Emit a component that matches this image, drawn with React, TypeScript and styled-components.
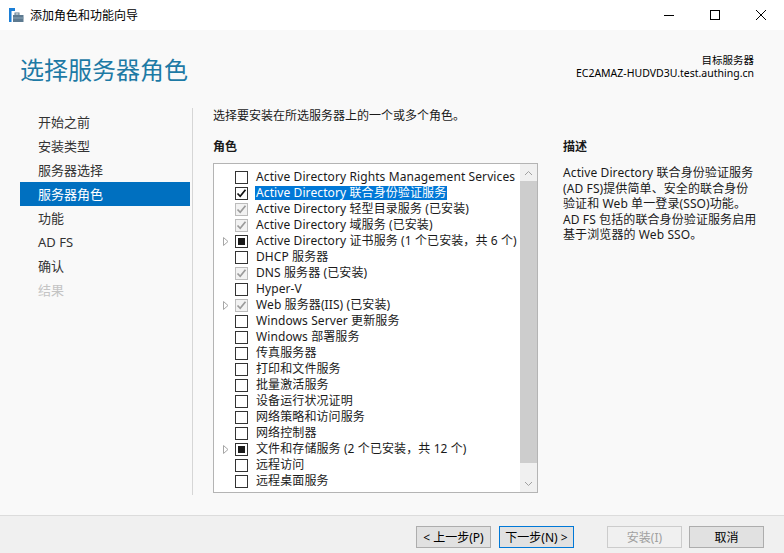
import React from "react";
import styled, { createGlobalStyle } from "styled-components";

const FONT = `"Segoe UI", "Noto Sans", "Noto Sans CJK SC", sans-serif`;

const Global = createGlobalStyle`
  html, body { margin: 0; padding: 0; }
  body { width: 784px; height: 553px; overflow: hidden; font-family: ${FONT}; background: #fff; }
  * { box-sizing: border-box; }
`;

const Window = styled.div`
  width: 784px;
  height: 553px;
  display: flex;
  flex-direction: column;
  background: #fff;
  color: #1a1a1a;
`;

const TitleBar = styled.div`
  height: 30px;
  display: flex;
  align-items: center;
  background: #fff;
  padding-left: 8px;
`;

const TitleText = styled.div`
  font-size: 12px;
  margin-left: 6px;
  flex: 1;
  color: #000;
`;

const Controls = styled.div`
  display: flex;
  height: 30px;
`;

const CtrlBtn = styled.div`
  width: 46px;
  height: 30px;
  display: flex;
  align-items: center;
  justify-content: center;
`;

const Header = styled.div`
  height: 70px;
  background: #f9f9f9;
  display: flex;
  justify-content: space-between;
  align-items: flex-start;
  padding: 24px 30px 0 20px;
`;

const PageTitle = styled.div`
  font-size: 24px;
  line-height: 30px;
  color: #1d7aa5;
  font-family: "Noto Sans CJK SC", sans-serif;
`;

const Target = styled.div`
  text-align: right;
  font-size: 10.5px;
  line-height: 13px;
  color: #000;
  display: flex;
  flex-direction: column;
`;

const TargetLine = styled.div`
  height: 13px;
  white-space: nowrap;
`;

const Body = styled.div`
  flex: 1;
  display: flex;
  background: #f9f9f9;
`;

const Nav = styled.div`
  width: 172px;
  margin-left: 20px;
  padding-top: 10px;
  display: flex;
  flex-direction: column;
`;

const NavItem = styled.div<{ $active?: boolean; $disabled?: boolean }>`
  height: 24px;
  line-height: 24px;
  padding-left: 18px;
  width: 170px;
  font-size: 13px;
  color: ${(p) => (p.$active ? "#fff" : p.$disabled ? "#c4c4c4" : "#333")};
  background: ${(p) => (p.$active ? "#0070c0" : "transparent")};
`;

const Divider = styled.div`
  width: 1px;
  background: #d6d6d6;
  margin: 8px 0 20px 0;
`;

const Main = styled.div`
  flex: 1;
  padding: 8px 0 0 20px;
  display: flex;
  flex-direction: column;
`;

const Intro = styled.div`
  font-size: 12px;
  line-height: 16px;
  color: #1a1a1a;
`;

const Columns = styled.div`
  display: flex;
  margin-top: 15px;
  gap: 25px;
`;

const Col = styled.div<{ $w: number }>`
  width: ${(p) => p.$w}px;
  display: flex;
  flex-direction: column;
`;

const Heading = styled.div`
  font-size: 12px;
  line-height: 16px;
  font-weight: bold;
  color: #1a1a1a;
  height: 24px;
`;

const ListBox = styled.div`
  width: 325px;
  height: 330px;
  border: 1px solid #b4b4b4;
  background: #fff;
  display: flex;
`;

const Rows = styled.div`
  flex: 1;
  padding-top: 5px;
`;

const Row = styled.div`
  height: 16px;
  display: flex;
  align-items: center;
`;

const Expander = styled.div`
  width: 21px;
  display: flex;
  justify-content: center;
  padding-left: 2px;
`;

const Box = styled.div<{ $gray?: boolean }>`
  width: 13px;
  height: 13px;
  border: 1px solid ${(p) => (p.$gray ? "#bcbcbc" : "#333")};
  background: ${(p) => (p.$gray ? "#f2f2f2" : "#fff")};
  display: flex;
  align-items: center;
  justify-content: center;
  margin-right: 8px;
`;

const Fill = styled.div`
  width: 7px;
  height: 7px;
  background: #1a1a1a;
`;

const Label = styled.span<{ $sel?: boolean }>`
  font-size: 12px;
  line-height: 14px;
  white-space: nowrap;
  letter-spacing: 0.1px;
  padding: 0 1px;
  margin-left: -1px;
  color: ${(p) => (p.$sel ? "#fff" : "#1a1a1a")};
  background: ${(p) => (p.$sel ? "#0078d7" : "transparent")};
`;

const ScrollBar = styled.div`
  width: 17px;
  display: flex;
  flex-direction: column;
  background: #f0f0f0;
`;

const Arrow = styled.div`
  height: 17px;
  display: flex;
  align-items: center;
  justify-content: center;
`;

const Thumb = styled.div`
  height: 282px;
  background: #cdcdcd;
`;

const Track = styled.div`
  flex: 1;
`;

const Desc = styled.div`
  font-size: 12px;
  line-height: 15.5px;
  color: #1a1a1a;
  white-space: pre;
  letter-spacing: 0.1px;
  padding-top: 2px;
`;

const Footer = styled.div`
  height: 38px;
  border-top: 1px solid #dcdcdc;
  background: #f0f0f0;
  display: flex;
  align-items: flex-start;
  padding: 10px 20px 0 416px;
`;

const Btn = styled.div<{ $primary?: boolean; $disabled?: boolean; $ml: number }>`
  width: 75px;
  height: 22px;
  margin-left: ${(p) => p.$ml}px;
  border: 1px solid ${(p) => (p.$primary ? "#0078d7" : p.$disabled ? "#cccccc" : "#adadad")};
  background: ${(p) => (p.$disabled ? "#f0f0f0" : "#e1e1e1")};
  color: ${(p) => (p.$disabled ? "#a0a0a0" : "#000")};
  font-size: 12px;
  display: flex;
  align-items: center;
  justify-content: center;
  white-space: pre;
`;

type RowData = { t: string; s: "none" | "check" | "gray" | "fill"; exp?: boolean; sel?: boolean };

const rows: RowData[] = [
  { t: "Active Directory Rights Management Services", s: "none" },
  { t: "Active Directory 联合身份验证服务", s: "check", sel: true },
  { t: "Active Directory 轻型目录服务 (已安装)", s: "gray" },
  { t: "Active Directory 域服务 (已安装)", s: "gray" },
  { t: "Active Directory 证书服务 (1 个已安装，共 6 个)", s: "fill", exp: true },
  { t: "DHCP 服务器", s: "none" },
  { t: "DNS 服务器 (已安装)", s: "gray" },
  { t: "Hyper-V", s: "none" },
  { t: "Web 服务器(IIS) (已安装)", s: "gray", exp: true },
  { t: "Windows Server 更新服务", s: "none" },
  { t: "Windows 部署服务", s: "none" },
  { t: "传真服务器", s: "none" },
  { t: "打印和文件服务", s: "none" },
  { t: "批量激活服务", s: "none" },
  { t: "设备运行状况证明", s: "none" },
  { t: "网络策略和访问服务", s: "none" },
  { t: "网络控制器", s: "none" },
  { t: "文件和存储服务 (2 个已安装，共 12 个)", s: "fill", exp: true },
  { t: "远程访问", s: "none" },
  { t: "远程桌面服务", s: "none" },
];

const Check = ({ color }: { color: string }) => (
  <svg width="11" height="11" viewBox="0 0 11 11">
    <path d="M1.5 5.5 L4.2 8.3 L9.5 1.8" fill="none" stroke={color} strokeWidth="1.7" />
  </svg>
);

const Tri = () => (
  <svg width="6" height="9" viewBox="0 0 6 9">
    <path d="M0.5 0.5 L5 4.5 L0.5 8.5 Z" fill="none" stroke="#a6a6a6" strokeWidth="1" />
  </svg>
);

const AppIcon = () => (
  <svg width="16" height="15" viewBox="0 0 16 15">
    <rect x="1" y="0" width="6" height="3" fill="#1c7fd6" />
    <rect x="1" y="0" width="2.5" height="14" fill="#1c7fd6" />
    <rect x="7" y="5" width="4" height="2" fill="none" stroke="#5d7a90" strokeWidth="1" />
    <rect x="5" y="7" width="10.5" height="7" fill="#5d7a90" />
    <rect x="5" y="9.5" width="10.5" height="1" fill="#8ea6b8" />
  </svg>
);

const navItems = ["开始之前", "安装类型", "服务器选择", "服务器角色", "功能", "AD FS", "确认", "结果"];

export default function App() {
  return (
    <>
      <Global />
      <Window>
        <TitleBar>
          <AppIcon />
          <TitleText>添加角色和功能向导</TitleText>
          <Controls>
            <CtrlBtn>
              <svg width="10" height="10" viewBox="0 0 10 10">
                <path d="M0 5.5 H10" stroke="#000" strokeWidth="1" />
              </svg>
            </CtrlBtn>
            <CtrlBtn>
              <svg width="10" height="10" viewBox="0 0 10 10">
                <rect x="0.5" y="0.5" width="9" height="9" fill="none" stroke="#000" strokeWidth="1" />
              </svg>
            </CtrlBtn>
            <CtrlBtn>
              <svg width="10" height="10" viewBox="0 0 10 10">
                <path d="M0 0 L10 10 M10 0 L0 10" stroke="#000" strokeWidth="1" />
              </svg>
            </CtrlBtn>
          </Controls>
        </TitleBar>
        <Header>
          <PageTitle>选择服务器角色</PageTitle>
          <Target>
            <TargetLine>目标服务器</TargetLine>
            <TargetLine>EC2AMAZ-HUDVD3U.test.authing.cn</TargetLine>
          </Target>
        </Header>
        <Body>
          <Nav>
            {navItems.map((n, i) => (
              <NavItem key={n} $active={i === 3} $disabled={i === 7}>
                {n}
              </NavItem>
            ))}
          </Nav>
          <Divider />
          <Main>
            <Intro>选择要安装在所选服务器上的一个或多个角色。</Intro>
            <Columns>
              <Col $w={325}>
                <Heading>角色</Heading>
                <ListBox>
                  <Rows>
                    {rows.map((r) => (
                      <Row key={r.t}>
                        <Expander>{r.exp ? <Tri /> : null}</Expander>
                        <Box $gray={r.s === "gray"}>
                          {r.s === "check" && <Check color="#111" />}
                          {r.s === "gray" && <Check color="#9a9a9a" />}
                          {r.s === "fill" && <Fill />}
                        </Box>
                        <Label $sel={r.sel}>{r.t}</Label>
                      </Row>
                    ))}
                  </Rows>
                  <ScrollBar>
                    <Arrow>
                      <svg width="9" height="6" viewBox="0 0 9 6">
                        <path d="M1 5 L4.5 1.5 L8 5" fill="none" stroke="#a0a0a0" strokeWidth="1" />
                      </svg>
                    </Arrow>
                    <Thumb />
                    <Track />
                    <Arrow>
                      <svg width="9" height="6" viewBox="0 0 9 6">
                        <path d="M1 1 L4.5 4.5 L8 1" fill="none" stroke="#a0a0a0" strokeWidth="1" />
                      </svg>
                    </Arrow>
                  </ScrollBar>
                </ListBox>
              </Col>
              <Col $w={210}>
                <Heading>描述</Heading>
                <Desc>
                  {"Active Directory 联合身份验证服务\n(AD FS)提供简单、安全的联合身份\n验证和 Web 单一登录(SSO)功能。\nAD FS 包括的联合身份验证服务启用\n基于浏览器的 Web SSO。"}
                </Desc>
              </Col>
            </Columns>
          </Main>
        </Body>
        <Footer>
          <Btn $ml={0}>{"< 上一步(P)"}</Btn>
          <Btn $ml={8} $primary>{"下一步(N) >"}</Btn>
          <Btn $ml={33} $disabled>安装(I)</Btn>
          <Btn $ml={7}>取消</Btn>
        </Footer>
      </Window>
    </>
  );
}
